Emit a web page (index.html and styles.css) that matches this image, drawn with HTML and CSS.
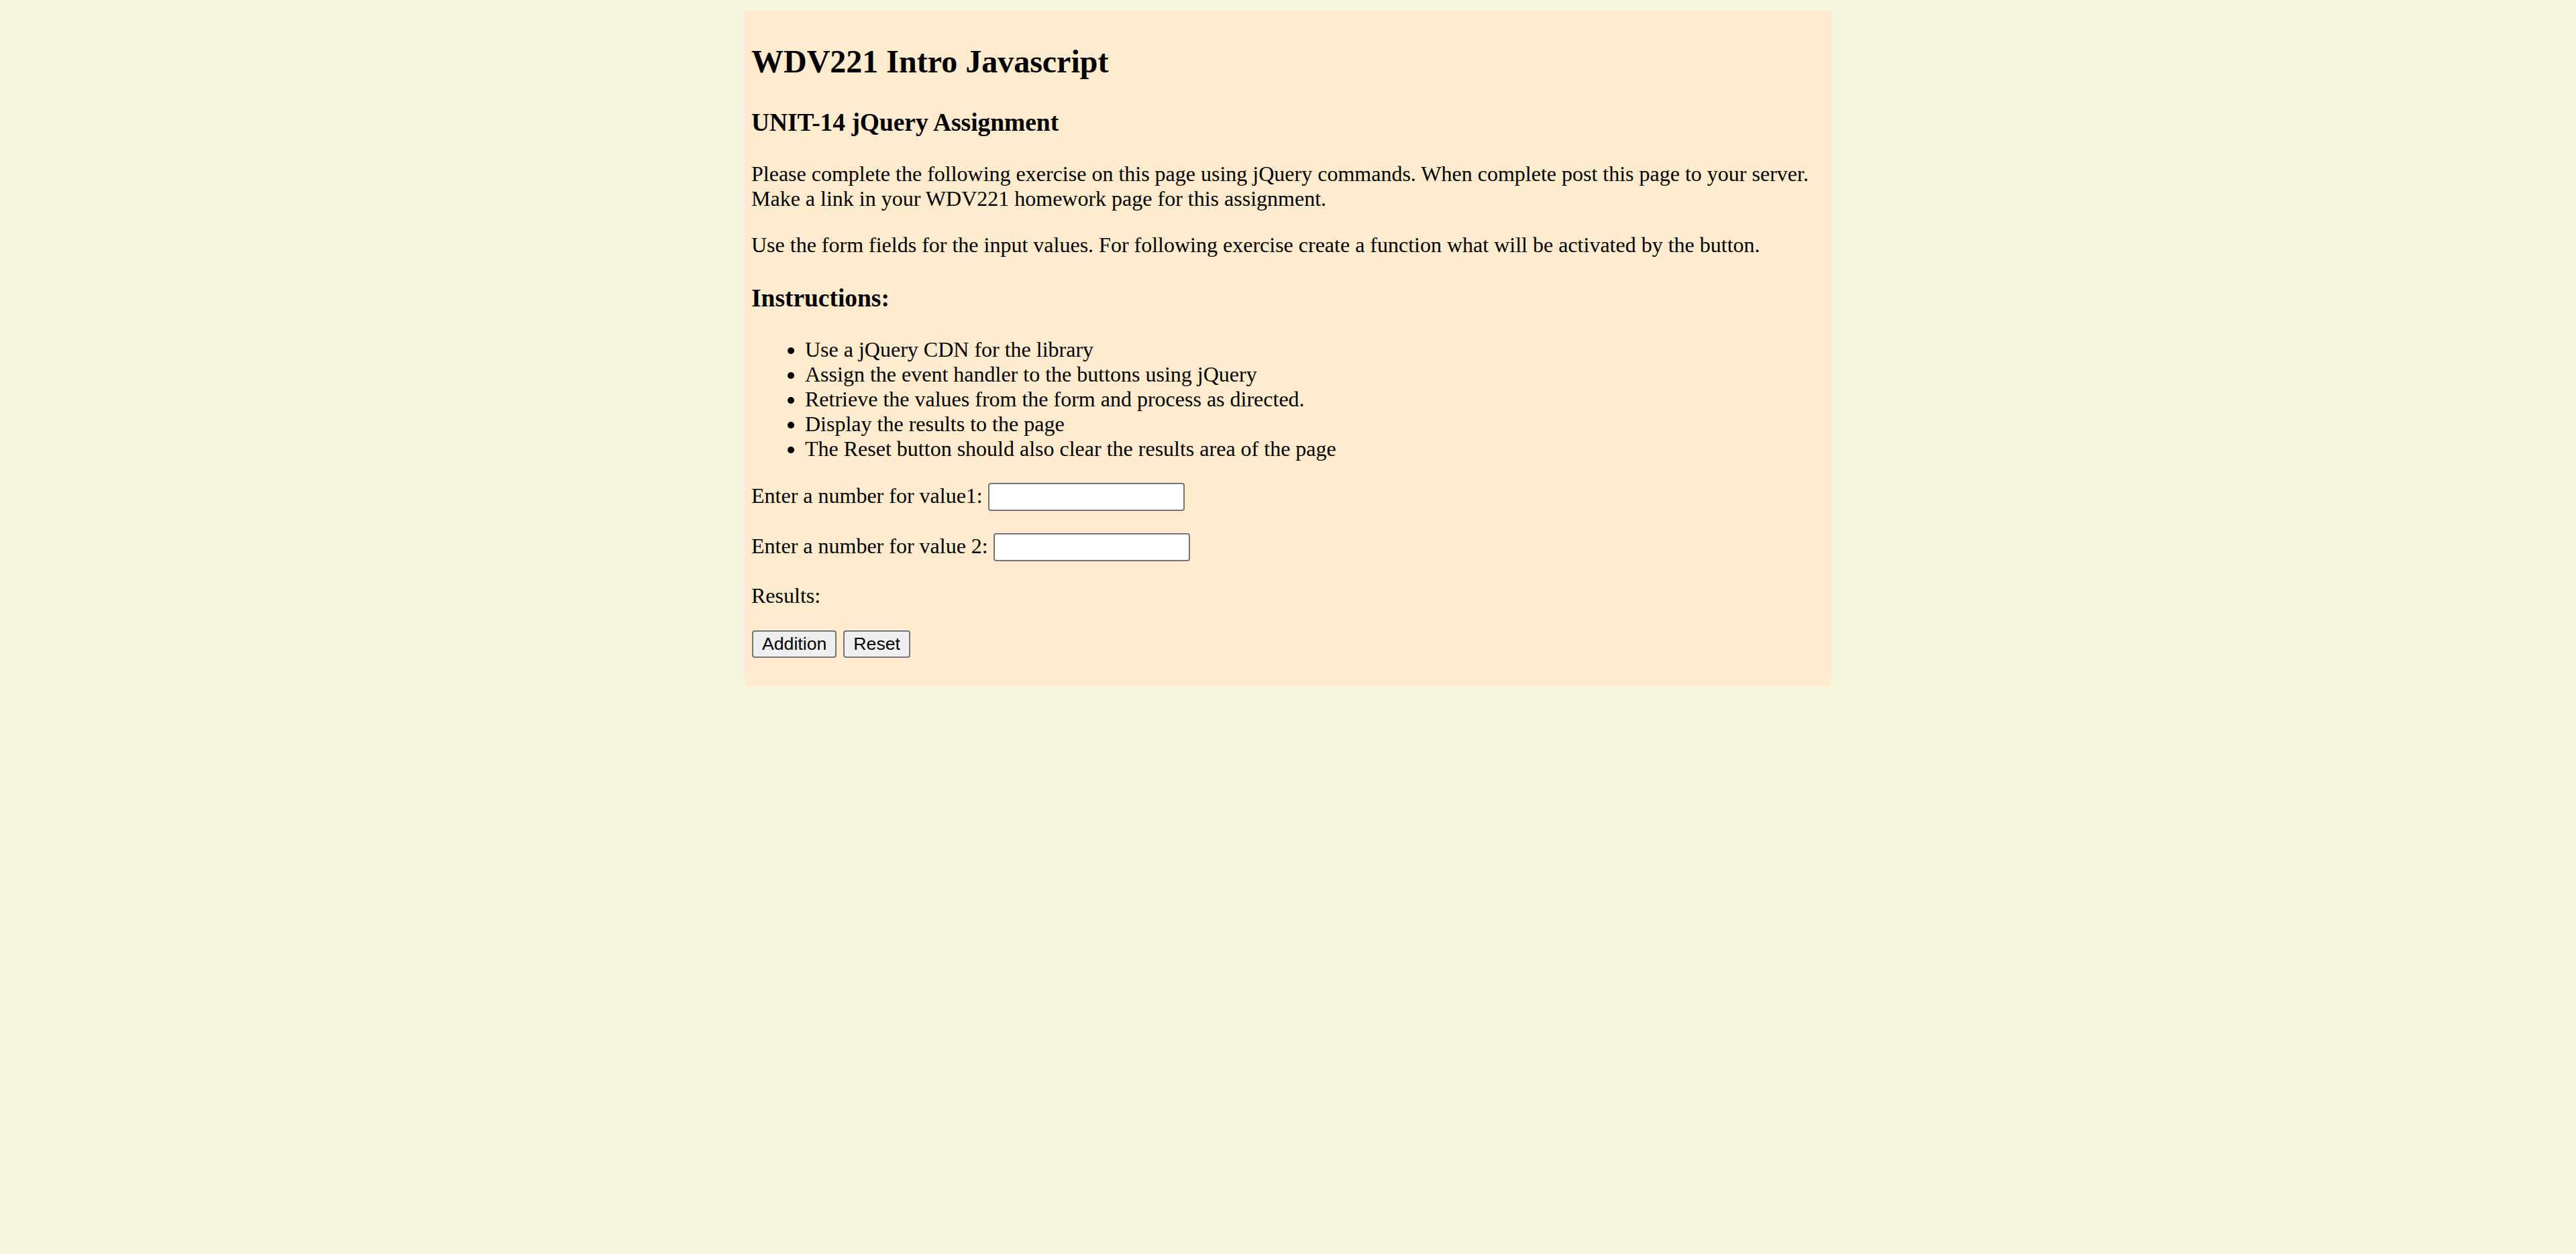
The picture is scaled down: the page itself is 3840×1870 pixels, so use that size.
FILE: index.html
```html
<!DOCTYPE html>
<html lang="en">
<head>
<meta charset="utf-8">
<title>WDV221 Intro Javascript</title>
<link rel="stylesheet" href="styles.css">
</head>
<body>
<section class="page">
  <h1 class="title">WDV221 Intro Javascript</h1>
  <h3 class="subtitle">UNIT-14 jQuery Assignment</h3>
  <p class="text">Please complete the following exercise on this page using jQuery commands. When complete post this page to your server. Make a link in your WDV221 homework page for this assignment.</p>
  <p class="text">Use the form fields for the input values. For following exercise create a function what will be activated by the button.</p>
  <h3 class="subtitle instructions">Instructions:</h3>
  <ul class="steps">
    <li>Use a jQuery CDN for the library</li>
    <li>Assign the event handler to the buttons using jQuery</li>
    <li>Retrieve the values from the form and process as directed.</li>
    <li>Display the results to the page</li>
    <li>The Reset button should also clear the results area of the page</li>
  </ul>
  <form class="calc">
    <p class="text row">Enter a number for value1: <input class="field" type="text" name="value1"></p>
    <p class="text row">Enter a number for value 2: <input class="field" type="text" name="value2"></p>
    <p class="text row">Results: <span class="result"></span></p>
    <p class="text row buttons"><button class="btn" type="button">Addition</button> <button class="btn" type="reset">Reset</button></p>
  </form>
</section>
</body>
</html>
```

FILE: styles.css
```css
html, body {
  background: #f5f5dc;
}

body {
  margin: 16px;
  font-family: "Liberation Serif", "Times New Roman", serif;
  color: #000;
}

.page {
  width: 1600px;
  margin: 0 auto;
  padding: 10px 10px 9px;
  background: #ffebcd;
  font-size: 32px;
}

.title {
  font-size: 48px;
  font-weight: bold;
  margin: 38px 0 42px;
}

.subtitle {
  font-size: 37.44px;
  font-weight: bold;
  margin: 0 0 37px;
}

.instructions {
  margin-top: 39px;
}

.text {
  margin: 32px 0;
}

.title + .subtitle {
  margin-top: 0;
}

.subtitle + .text {
  margin-top: 0;
}

.steps {
  margin: 32px 0;
  padding-left: 80px;
  list-style: disc;
}

.calc {
  margin: 0;
}

.row {
  margin: 32px 0 33px;
}

.field {
  box-sizing: border-box;
  width: 293px;
  height: 42px;
  margin: 0;
  padding: 2px 4px;
  border: 2px solid #767676;
  border-radius: 4px;
  background: #fff;
  font-family: "Liberation Sans", Arial, sans-serif;
  font-size: 26.67px;
  vertical-align: baseline;
}

.btn {
  box-sizing: border-box;
  height: 41px;
  margin: 0 1px;
  padding: 0 13px;
  border: 2px solid #767676;
  border-radius: 4px;
  background: #efefef;
  color: #000;
  font-family: "Liberation Sans", Arial, sans-serif;
  font-size: 26.67px;
  vertical-align: baseline;
}
```
